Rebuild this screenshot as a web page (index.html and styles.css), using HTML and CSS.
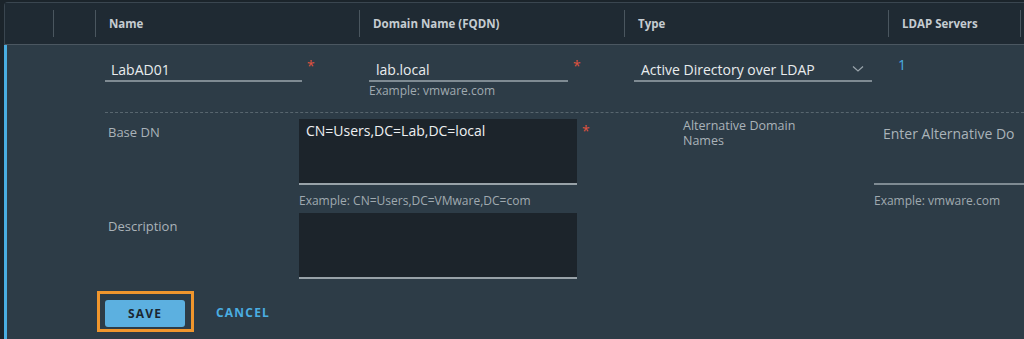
FILE: index.html
```html
<!DOCTYPE html>
<html lang="en">
<head>
    <meta charset="UTF-8">
    <meta name="viewport" content="width=device-width, initial-scale=1.0">
    <title>Identity Sources</title>
    <link rel="stylesheet" href="styles.css">
</head>
<body>
    <div class="datagrid">
        <div class="dg-header">
            <div class="dg-col first"></div>
            <div class="dg-col"></div>
            <div class="dg-col">Name</div>
            <div class="dg-col">Domain Name (FQDN)</div>
            <div class="dg-col">Type</div>
            <div class="dg-col">LDAP Servers</div>
            <div class="dg-col"></div>
        </div>

        <div class="dg-row">
            <div class="edit-top">
                <div class="field">
                    <div class="control">
                        <input class="text-input name-input" type="text" value="LabAD01">
                    </div>
                    <span class="req">*</span>
                </div>
                <div class="field">
                    <div class="control">
                        <input class="text-input domain-input" type="text" value="lab.local">
                        <div class="helper">Example: vmware.com</div>
                    </div>
                    <span class="req">*</span>
                </div>
                <div class="field">
                    <div class="select">
                        <span>Active Directory over LDAP</span>
                        <svg width="12" height="8" viewBox="0 0 12 8"><path d="M1 1.5 L6 6 L11 1.5" fill="none" stroke="#9aa5ac" stroke-width="1.2"/></svg>
                    </div>
                </div>
                <div class="ldap-count">1</div>
            </div>

            <div class="edit-bottom">
                <div class="label base-label">Base DN</div>
                <div class="area-field">
                    <textarea class="area">CN=Users,DC=Lab,DC=local</textarea>
                    <div class="helper">Example: CN=Users,DC=VMware,DC=com</div>
                </div>
                <div class="spacer"><span class="req">*</span></div>
                <div class="label alt-label">Alternative Domain<br>Names</div>
                <div class="area-field">
                    <div class="area plain"><span class="placeholder">Enter Alternative Do</span></div>
                    <div class="helper">Example: vmware.com</div>
                </div>

                <div class="label desc-label">Description</div>
                <div class="area-field">
                    <textarea class="area"></textarea>
                </div>
            </div>

            <div class="actions">
                <span class="highlight">
                    <button class="btn-save">SAVE</button>
                </span>
                <button class="btn-link">CANCEL</button>
            </div>
        </div>
    </div>
</body>
</html>
```

FILE: styles.css
```css
body {
    margin: 0;
    background-color: #1b242b;
    font-family: 'Open Sans', sans-serif;
    overflow: hidden;
}

.datagrid {
    margin: 2px 0 0 4px;
    border-top: 1px solid #3a4650;
    border-left: 1px solid #3a4650;
    border-top-left-radius: 4px;
    height: 337px;
    display: flex;
    flex-direction: column;
}

.dg-header {
    display: grid;
    grid-template-columns: 48px 42px 264px 265px 264px 132px 1fr;
    background-color: #1f2a33;
    border-bottom: 1px solid #4b5761;
    padding: 7px 0;
}

.dg-col {
    height: 27px;
    border-left: 1px solid #4a565f;
    padding-left: 13px;
    display: flex;
    align-items: center;
    font-size: 11.5px;
    font-weight: 700;
    color: #c5ccd1;
}

.dg-col.first {
    border-left: none;
}

.dg-row {
    flex: 1;
    background-color: #2d3c47;
    border-left: 3px solid #4aaee2;
    margin-left: -1px;
    padding-left: 98px;
}

.edit-top {
    display: grid;
    grid-template-columns: 264px 265px 264px 1fr;
    padding-top: 13px;
    height: 54px;
    border-bottom: 1px dashed #58666f;
}

.field {
    display: flex;
    align-items: flex-start;
}

.control {
    display: flex;
    flex-direction: column;
}

.text-input {
    height: 22px;
    box-sizing: content-box;
    padding: 0 6px;
    border: none;
    border-bottom: 2px solid #7f8b93;
    background: transparent;
    color: #e9ecee;
    font-family: inherit;
    font-size: 14px;
    outline: none;
}

.name-input {
    width: 185px;
}

.domain-input {
    width: 186px;
    padding-left: 7px;
}

.req {
    color: #e0533f;
    font-size: 14px;
    line-height: 14px;
    margin: 1px 0 0 5px;
}

.helper {
    font-size: 12px;
    line-height: 15px;
    color: #a0aab0;
    margin-top: 1px;
}

.select {
    width: 223px;
    height: 22px;
    padding: 0 8px 0 7px;
    border-bottom: 2px solid #7f8b93;
    display: flex;
    align-items: center;
    justify-content: space-between;
    font-size: 14px;
    color: #e9ecee;
}

.ldap-count {
    color: #4aaee2;
    font-size: 14px;
    line-height: 14px;
}

.edit-bottom {
    display: grid;
    grid-template-columns: 194px 278px 106px 191px 1fr;
    row-gap: 5px;
    padding-top: 6px;
}

.label {
    font-size: 13px;
    color: #aab3b9;
}

.base-label,
.desc-label {
    padding: 4px 0 0 3px;
}

.alt-label {
    font-size: 12.5px;
    line-height: 15px;
    margin-top: -1px;
}

.area-field {
    display: flex;
    flex-direction: column;
}

.area {
    height: 62px;
    box-sizing: content-box;
    padding: 2px 7px 0;
    border: none;
    border-bottom: 2px solid #98a2a8;
    background-color: #1c242b;
    color: #eef0f2;
    font-family: inherit;
    font-size: 14px;
    resize: none;
    outline: none;
}

.area-field .helper {
    margin-top: 8px;
}

.area.plain {
    background: transparent;
    border-bottom-color: #7f8b93;
    padding: 5px 9px 0;
    height: 59px;
    white-space: nowrap;
    overflow: hidden;
}

.placeholder {
    color: #aab3b9;
}

.spacer .req {
    display: inline-block;
    margin-left: 5px;
    margin-top: 1px;
}

.desc-label,
.desc-label + .area-field {
    grid-row: 2;
}

.desc-label + .area-field {
    grid-column: 2;
}

.actions {
    display: flex;
    align-items: center;
    margin: 12px 0 0 -8px;
    gap: 22px;
}

.highlight {
    display: inline-block;
    border: 3px solid #f0962d;
    padding: 6px 6px 2px 5px;
}

.btn-save {
    display: block;
    width: 80px;
    height: 27px;
    border: none;
    border-radius: 3px;
    background-color: #5cb0e0;
    color: #1b2730;
    font-family: inherit;
    font-size: 12px;
    font-weight: 700;
    letter-spacing: 1.2px;
}

.btn-link {
    border: none;
    background: transparent;
    color: #4aaee2;
    font-family: inherit;
    font-size: 12px;
    font-weight: 700;
    letter-spacing: 1.2px;
    padding: 0;
    margin-top: 2px;
}
```
